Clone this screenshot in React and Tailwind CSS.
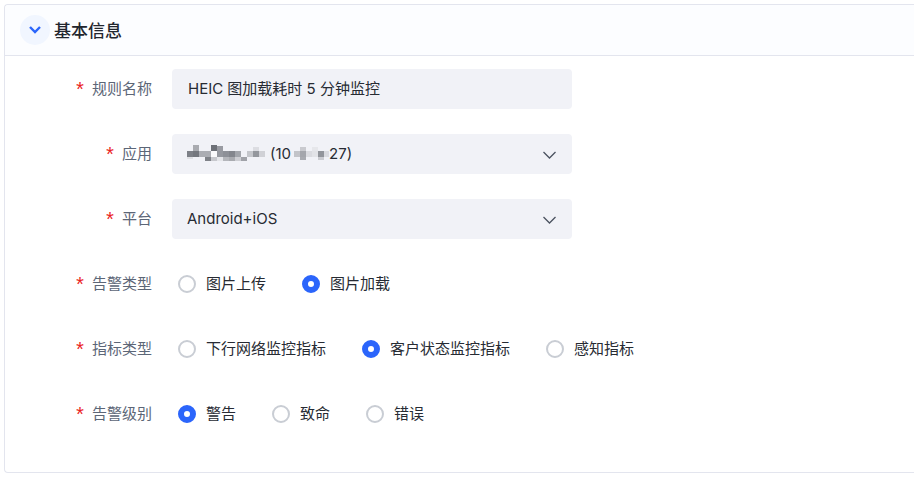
import { useState } from "react";

const LATIN = "font-[Inter,'Noto_Sans_CJK_SC',sans-serif]";

// [x, y, width, height, fill] of each block that hides the private part of the app name
const NAME_MASK = [
  [6, 0, 6, 6, "#a9abb0"], [24, 0, 6, 6, "#6d7077"], [30, 1, 6, 5, "#999ba2"], [66, 2, 6, 4, "#dcdde2"],
  [0, 6, 6, 6, "#7d8087"], [6, 6, 6, 6, "#74777e"], [12, 6, 12, 6, "#abadb3"], [24, 6, 6, 6, "#fafafc"],
  [30, 6, 6, 6, "#95989f"], [36, 6, 6, 6, "#8d9097"], [42, 6, 6, 6, "#83868d"], [48, 6, 6, 6, "#a2a5ab"],
  [60, 6, 6, 6, "#c4c6cb"], [66, 6, 6, 6, "#94979d"], [72, 6, 6, 6, "#d0d1d6"],
  [0, 12, 6, 2, "#dfe0e4"], [18, 12, 6, 4, "#7f8288"], [24, 12, 6, 4, "#c7c8cd"], [30, 12, 6, 4, "#e4e5e9"],
  [36, 12, 6, 4, "#b4b6bb"], [42, 12, 6, 4, "#a9abb0"], [48, 12, 6, 4, "#cdced3"], [54, 12, 6, 4, "#a0a2a8"],
];

const ID_MASK = [
  [6, 2, 6, 4, "#c9cacf"], [18, 2, 6, 4, "#e6e7eb"],
  [0, 6, 6, 6, "#c3c4c9"], [6, 6, 6, 6, "#a4a6ac"], [12, 6, 6, 6, "#dadbe0"], [18, 6, 6, 6, "#e2e3e7"],
  [24, 6, 6, 6, "#92959b"], [30, 6, 5, 6, "#d9dadf"],
  [6, 12, 6, 3, "#a9abb1"], [24, 12, 6, 3, "#cbccd1"],
];

function Mask({ blocks, className }) {
  return (
    <svg aria-hidden="true" width="80" height="16" className={className} shapeRendering="crispEdges">
      {blocks.map(([x, y, w, h, fill]) => (
        <rect key={`${x}-${y}`} x={x} y={y} width={w} height={h} fill={fill} />
      ))}
    </svg>
  );
}

function RequiredMark() {
  return <span aria-hidden="true" className="mr-1.5 pt-2 font-['Liberation_Mono',monospace] text-xl leading-4 text-[#ea1f25]">*</span>;
}

function Row({ label, htmlFor, children }) {
  return (
    <div className="flex h-10 items-center">
      <label htmlFor={htmlFor} className="flex w-[147px] shrink-0 items-center justify-end pb-0.5 text-[#5c6677]">
        <RequiredMark />
        {label}
      </label>
      <div className="ml-5 w-[400px]">{children}</div>
    </div>
  );
}

function Select({ id, options, className, children }) {
  return (
    <div className="relative">
      <select id={id} className={`block h-10 w-full appearance-none rounded-sm bg-[#f1f2f7] pr-10 text-[#272b33] outline-none ${LATIN} ${className}`}>
        {options.map(o => <option key={o}>{o}</option>)}
      </select>
      {children}
      <svg aria-hidden="true" viewBox="0 0 14 8" fill="none" stroke="#4b5260" strokeWidth="1.3"
        className="pointer-events-none absolute right-4 top-[17px] h-2 w-3.5">
        <path d="M1.5 1l6 6 6-6" />
      </svg>
    </div>
  );
}

function RadioRow({ label, name, options, initial }) {
  const [value, setValue] = useState(initial);

  return (
    <fieldset className="flex h-10 items-center">
      <legend className="float-left flex h-10 w-[147px] shrink-0 items-center justify-end pb-0.5 text-[#5c6677]">
        <RequiredMark />
        {label}
      </legend>
      <div className="ml-[26px] flex items-center gap-9 whitespace-nowrap text-[#272b33]">
        {options.map(o => (
          <label key={o} className="flex items-center gap-2.5">
            <input type="radio" name={name} checked={value === o} onChange={() => setValue(o)}
              className="size-[18px] appearance-none rounded-full border-2 border-[#c9cdd4] bg-white checked:border-[6px] checked:border-[#2b65fb]" />
            <span className="pb-0.5">{o}</span>
          </label>
        ))}
      </div>
    </fieldset>
  );
}

export default function App() {
  const [open, setOpen] = useState(true);

  return (
    <main className="min-h-screen bg-white pl-1 pt-1 text-[15px] leading-6 font-['Noto_Sans_CJK_SC',sans-serif]">
      <section className="rounded-l border border-r-0 border-[#e3e5ee]">
        <header className="flex h-[51px] items-center rounded-tl border-b border-[#e3e5ee] bg-[#fcfdff] pl-[15px]">
          <button type="button" aria-label="基本信息" aria-expanded={open} onClick={() => setOpen(!open)}
            className="flex size-[30px] items-center justify-center rounded-full bg-[#f1f6ff]">
            <svg viewBox="0 0 12 8" fill="none" stroke="#2b65fb" strokeWidth="2.4" className={open ? "h-2 w-3" : "h-2 w-3 -rotate-90"}>
              <path d="M1 1l5 5 5-5" />
            </svg>
          </button>
          <h2 className="ml-1 text-[17px] font-medium text-[#22262e]">基本信息</h2>
        </header>

        {open && (
          <form className="flex flex-col gap-[25px] pb-[38px] pt-[13px]">
            <Row label="规则名称" htmlFor="rule-name">
              <input id="rule-name" type="text" defaultValue="HEIC 图加载耗时 5 分钟监控"
                className={`block h-10 w-full rounded-sm bg-[#f1f2f7] px-4 pb-1 text-[#272b33] outline-none ${LATIN}`} />
            </Row>
            <Row label="应用" htmlFor="app">
              <Select id="app" options={["(10\u00a0\u00a0\u00a0\u00a0\u00a0\u00a0\u00a0\u00a0\u00a027)"]} className="pl-[98px]">
                <Mask blocks={NAME_MASK} className="pointer-events-none absolute left-[15px] top-[11px]" />
                <Mask blocks={ID_MASK} className="pointer-events-none absolute left-[122px] top-[11px]" />
              </Select>
            </Row>
            <Row label="平台" htmlFor="platform">
              <Select id="platform" options={["Android+iOS", "Android", "iOS"]} className="pl-[15px]" />
            </Row>
            <RadioRow label="告警类型" name="alarm-type" options={["图片上传", "图片加载"]} initial="图片加载" />
            <RadioRow label="指标类型" name="metric-type" options={["下行网络监控指标", "客户状态监控指标", "感知指标"]} initial="客户状态监控指标" />
            <RadioRow label="告警级别" name="alarm-level" options={["警告", "致命", "错误"]} initial="警告" />
          </form>
        )}
      </section>
    </main>
  );
}
